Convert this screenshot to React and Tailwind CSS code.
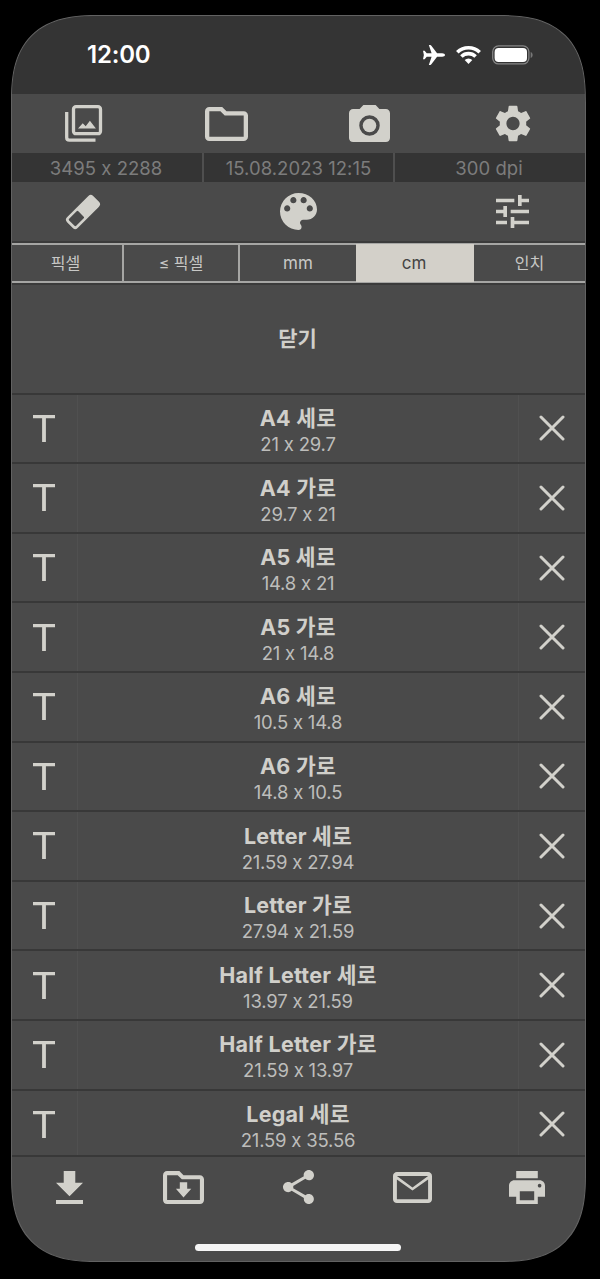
import React from 'react';

const PAGES = [
  ['A4 세로', '21 x 29.7'],
  ['A4 가로', '29.7 x 21'],
  ['A5 세로', '14.8 x 21'],
  ['A5 가로', '21 x 14.8'],
  ['A6 세로', '10.5 x 14.8'],
  ['A6 가로', '14.8 x 10.5'],
  ['Letter 세로', '21.59 x 27.94'],
  ['Letter 가로', '27.94 x 21.59'],
  ['Half Letter 세로', '13.97 x 21.59'],
  ['Half Letter 가로', '21.59 x 13.97'],
  ['Legal 세로', '21.59 x 35.56'],
];

// Each icon's view box is cropped to its drawing, so the class gives the drawn size.
function Icon({ box, className, children }) {
  return (
    <svg viewBox={box} preserveAspectRatio="none" fill="currentColor" className={`shrink-0 overflow-visible ${className}`}>
      {children}
    </svg>
  );
}

function StatusBar() {
  return (
    <div className="flex h-[78px] shrink-0 items-center justify-between bg-[#343434] pr-[52px] pl-[75px] text-white">
      <span className="text-[24px] leading-[30px] font-semibold tracking-[-0.2px]">12:00</span>
      <div className="flex items-center">
        <Icon box="2 2.5 20 19" className="h-[20px] w-[22px]">
          <path d="M22 12c0-.9-1.2-1.6-2.6-1.6h-4.6L9.6 3.1c-.3-.4-.6-.6-1-.6H7.3l2.5 7.9H5.4L3.5 8H2l.8 4L2 16h1.5l1.9-2.4h4.4l-2.5 7.900h1.3c.4 0 .7-.2 1-.6l5.2-7.3h4.6c1.400 0 2.600-.7 2.600-1.600z" />
        </Icon>
        <Icon box="0 0 25 18" className="ml-[11px] h-[18px] w-[25px]">
          <g fill="none" stroke="currentColor" strokeWidth="3.6">
            <path d="M1.300 6.300a16 16 0 0 1 22.400 0" />
            <path d="M5.400 10.500a10.200 10.200 0 0 1 14.200 0" />
          </g>
          <path d="M12.500 18l-3.800-3.900a5.400 5.400 0 0 1 7.600 0z" />
        </Icon>
        <svg viewBox="0 0 41 20" className="ml-[11px] h-[20px] w-[41px]">
          <rect x="0.700" y="0.900" width="36.200" height="18" rx="5.800" fill="none" stroke="#858585" strokeWidth="1.300" />
          <rect x="2.600" y="2.900" width="32.400" height="14" rx="4" fill="#fff" />
          <path d="M38.700 6.900v6c2.600-.8 2.600-5.200 0-6z" fill="#777" />
        </svg>
      </div>
    </div>
  );
}

function SourceBar() {
  return (
    <div className="flex h-[59px] shrink-0 items-center pl-[53px]">
      <Icon box="0 0 37 37" className="h-[37px] w-[37px]">
        <g fill="none" stroke="currentColor" strokeWidth="3.300">
          <rect x="8.500" y="1.700" width="27" height="27" rx="2.500" />
          <path d="M1.700 7v25.500q0 2.700 2.700 2.700H30.500" />
        </g>
        <path d="M13 23.500l4.700-5.200 3 3 4.200-5.600 6 7.800z" />
      </Icon>
      <Icon box="2 4 20 16" className="ml-[103px] h-[34px] w-[43px]">
        <path d="M9.170 6l2 2H20v10H4V6h5.170M10 4H4c-1.100 0-1.990.9-1.990 2L2 18c0 1.100.9 2 2 2h16c1.100 0 2-.9 2-2V8c0-1.100-.9-2-2-2h-8l-2-2z" />
      </Icon>
      <Icon box="2 2 20 18" className="ml-[101px] h-[37px] w-[41px]">
        <path fillRule="evenodd" d="M9 2L7.170 4H4c-1.100 0-2 .9-2 2v12c0 1.100.9 2 2 2h16c1.100 0 2-.9 2-2V6c0-1.100-.9-2-2-2h-3.170L15 2zM12 17a5 5 0 1 1 0-10 5 5 0 0 1 0 10z" />
        <circle cx="12" cy="12" r="3.300" />
      </Icon>
      <Icon box="2.200 2 19.600 20" className="ml-[105px] h-[37px] w-[36px]">
        <path d="M19.140 12.940c.04-.3.060-.61.060-.94 0-.32-.02-.64-.070-.94l2.030-1.580c.18-.14.230-.41.120-.61l-1.920-3.320c-.12-.22-.37-.29-.59-.22l-2.390.96c-.5-.38-1.030-.7-1.620-.94l-.36-2.540c-.04-.24-.24-.41-.48-.41h-3.840c-.24 0-.43.17-.47.41l-.36 2.540c-.59.24-1.130.57-1.620.94l-2.390-.96c-.22-.08-.47 0-.59.22L2.740 8.870c-.12.21-.08.47.12.61l2.030 1.580c-.05.3-.09.63-.09.94s.02.64.070.94l-2.030 1.580c-.18.14-.23.41-.12.61l1.920 3.320c.12.22.37.29.59.22l2.390-.96c.5.38 1.030.7 1.620.94l.36 2.540c.05.24.24.41.48.41h3.840c.24 0 .44-.17.47-.41l.36-2.540c.59-.24 1.130-.56 1.620-.94l2.390.96c.22.08.47 0 .59-.22l1.920-3.320c.12-.22.070-.47-.12-.61l-2.010-1.580zM12 15.600c-1.980 0-3.600-1.620-3.600-3.600s1.620-3.600 3.600-3.600 3.600 1.620 3.600 3.600-1.620 3.600-3.600 3.600z" />
      </Icon>
    </div>
  );
}

function InfoBar() {
  return (
    <div className="flex h-[29px] shrink-0 bg-[#343434] text-center text-[18.500px] leading-[30px] tracking-[0.050px] text-[#7c7c7c]">
      <div className="w-[190px] pr-[2px]">3495 x 2288</div>
      <div className="w-[193px] border-x-2 border-[#4f4f4f]">15.08.2023 12:15</div>
      <div className="flex-1 pr-[2px]">300 dpi</div>
    </div>
  );
}

function EditBar() {
  return (
    <div className="flex h-[59px] shrink-0 items-center justify-between pr-[56px] pl-[54px]">
      <Icon box="0 0 34 34" className="h-[34px] w-[34px]">
        <g transform="rotate(-45 17 17)">
          <rect x="-1.500" y="9.500" width="37" height="15" rx="3.400" />
          <rect x="1.200" y="12" width="13" height="10" rx="1.200" fill="#4a4a4a" />
        </g>
      </Icon>
      <Icon box="3 3 18 18" className="h-[37px] w-[37px]">
        <path d="M12 3a9 9 0 0 0 0 18c.83 0 1.500-.67 1.500-1.500 0-.39-.15-.74-.39-1.010-.23-.26-.38-.61-.38-.99 0-.83.67-1.500 1.500-1.500H16c2.760 0 5-2.240 5-5 0-4.420-4.030-8-9-8zm-5.500 9c-.83 0-1.500-.67-1.500-1.500S5.670 9 6.500 9 8 9.670 8 10.500 7.330 12 6.500 12zm3-4C8.670 8 8 7.330 8 6.500S8.670 5 9.500 5s1.500.67 1.500 1.500S10.330 8 9.500 8zm5 0c-.83 0-1.500-.67-1.500-1.500S13.670 5 14.500 5s1.500.67 1.500 1.500S15.330 8 14.500 8zm3 4c-.83 0-1.500-.67-1.500-1.500S16.670 9 17.500 9s1.500.67 1.500 1.500-.67 1.500-1.500 1.500z" />
      </Icon>
      <Icon box="3 3 18 18" className="h-[33px] w-[33px]">
        <path d="M3 17v2h6v-2H3zM3 5v2h10V5H3zm10 16v-2h8v-2h-8v-2h-2v6h2zM7 9v2H3v2h4v2h2V9H7zm14 4v-2H11v2h10zm-6-4h2V7h4V5h-4V3h-2v6z" />
      </Icon>
    </div>
  );
}

function UnitTabs() {
  return (
    <div className="shrink-0 border-y-2 border-[#3b3b3b]">
      <div className="flex h-[40px] border-y-2 border-y-[#a6a6a4] text-center text-[17px] leading-[36px] text-[#c8c8c6]">
        <div className="w-[112px] border-r-2 border-[#a6a6a4] pr-[3px] text-[16px]">픽셀</div>
        <div className="w-[116px] border-r-2 border-[#a6a6a4] text-[16px]">≤ 픽셀</div>
        <div className="w-[116px] leading-[37px]">mm</div>
        <div className="-my-px w-[118px] bg-[#d3d0c9] pr-[2px] leading-[39px] text-[#444]">cm</div>
        <div className="flex-1 text-[16px]">인치</div>
      </div>
    </div>
  );
}

function PageRow({ name, size }) {
  return (
    <div className="flex h-[69.600px] shrink-0 border-t-2 border-[#383838]">
      <div className="flex w-[66px] items-center justify-center border-r border-[#505050] pr-[2px]">
        <Icon box="0 0 22 27" className="h-[27px] w-[22px]">
          <path d="M0 0h22v3.300H12.900V27H9.100V3.300H0z" />
        </Icon>
      </div>
      <div className="flex-1 pt-[9.400px] text-center">
        <div className="text-[21.500px] leading-[28px] font-bold tracking-[0.250px] text-[#d0cfca]">{name}</div>
        <div className="text-[18.500px] leading-[25px] tracking-[-0.200px] text-[#bdbdbb]">{size}</div>
      </div>
      <div className="flex w-[67px] items-center justify-center border-l border-[#505050]">
        <svg viewBox="0 0 26 26" className="h-[26px] w-[26px]" fill="none" stroke="currentColor" strokeWidth="3" strokeLinecap="round">
          <path d="M2 2l22 22M24 2l-22 22" />
        </svg>
      </div>
    </div>
  );
}

function ExportBar() {
  return (
    <div className="flex h-[62px] shrink-0 items-center border-t-2 border-[#383838] pl-[44px]">
      <Icon box="5 3 14 17" className="h-[33px] w-[27px]">
        <path d="M19 9h-4V3H9v6H5l7 7 7-7zM5 18v2h14v-2H5z" />
      </Icon>
      <Icon box="2 4 20 16" className="ml-[80px] h-[33px] w-[41px]">
        <path d="M9.170 6l2 2H20v10H4V6h5.170M10 4H4c-1.100 0-1.990.9-1.990 2L2 18c0 1.100.9 2 2 2h16c1.100 0 2-.9 2-2V8c0-1.100-.9-2-2-2h-8l-2-2z" />
        <path d="M10.200 9.500h3.600v3.100h2L12 16.800l-3.700-4.200h1.900z" />
      </Icon>
      <Icon box="3 2 18 19.900" className="ml-[79px] h-[34px] w-[31px]">
        <path d="M18 16.080c-.76 0-1.440.3-1.960.77L8.910 12.700c.05-.23.090-.46.090-.7s-.04-.47-.09-.7l7.050-4.110c.54.5 1.250.81 2.040.81 1.660 0 3-1.340 3-3s-1.340-3-3-3-3 1.340-3 3c0 .24.040.47.090.7L8.040 9.810C7.500 9.310 6.790 9 6 9c-1.660 0-3 1.340-3 3s1.340 3 3 3c.79 0 1.500-.31 2.040-.81l7.120 4.160c-.05.21-.08.43-.08.65 0 1.610 1.310 2.920 2.920 2.920s2.920-1.310 2.920-2.920-1.310-2.920-2.920-2.920z" />
      </Icon>
      <Icon box="2 4 20 16" className="ml-[79px] h-[31px] w-[39px]">
        <path d="M22 6c0-1.100-.9-2-2-2H4c-1.100 0-2 .9-2 2v12c0 1.100.9 2 2 2h16c1.100 0 2-.9 2-2V6zm-2 0l-8 6-8-6h16zm0 12H4V7.900l8 5.700 8-5.700V18z" />
      </Icon>
      <Icon box="2 3 20 18" className="ml-[77px] h-[33px] w-[36px]">
        <path d="M19 8H5c-1.660 0-3 1.340-3 3v6h4v4h12v-4h4v-6c0-1.660-1.340-3-3-3zm-3 11H8v-5h8v5zm3-7c-.55 0-1-.45-1-1s.45-1 1-1 1 .45 1 1-.45 1-1 1zm-1-9H6v4h12V3z" />
      </Icon>
    </div>
  );
}

export default function App() {
  return (
    <div className="h-[1279px] w-[600px] bg-black pt-[15px] pl-[11px] font-['Inter','Noto_Sans_CJK_KR',sans-serif]">
      <div className="flex h-[1247px] w-[575px] flex-col overflow-hidden rounded-[72px] border border-[#626262] bg-[#4a4a4a] text-[#d2d1cb] [corner-shape:superellipse(1.4)] supports-[corner-shape:round]:rounded-[88px]">
        <StatusBar />
        <SourceBar />
        <InfoBar />
        <EditBar />
        <UnitTabs />
        <button className="h-[107.600px] shrink-0 pr-[2px] text-[21px] leading-[107px] font-bold text-[#d0cfca]">닫기</button>
        <div className="flex h-[762.800px] shrink-0 flex-col overflow-hidden">
          {PAGES.map(([name, size]) => (
            <PageRow key={name} name={name} size={size} />
          ))}
        </div>
        <ExportBar />
        <div className="mt-[27px] ml-[183px] h-[7px] w-[206px] shrink-0 rounded-full bg-[#f5f5f5]" />
      </div>
    </div>
  );
}
